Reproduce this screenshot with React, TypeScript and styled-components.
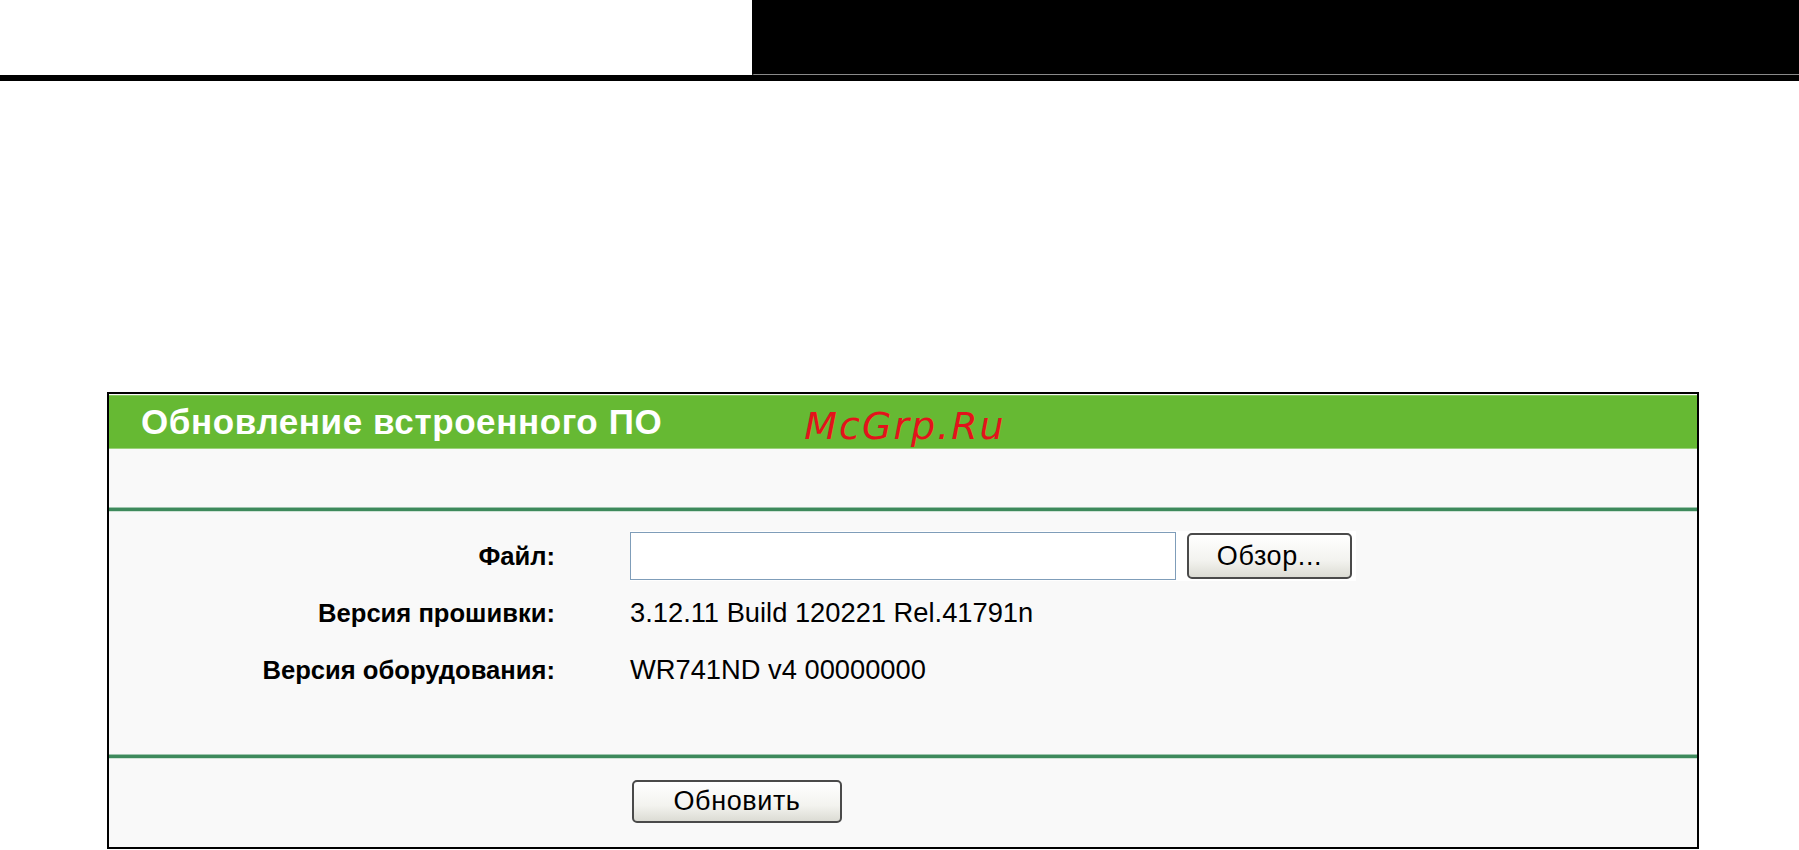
import React from "react";
import styled, { createGlobalStyle } from "styled-components";

const GlobalStyle = createGlobalStyle`
  html, body {
    margin: 0;
    padding: 0;
    background: #fff;
    font-family: "Liberation Sans", Arial, sans-serif;
  }
`;

const rows = [
  { label: "Версия прошивки:", value: "3.12.11 Build 120221 Rel.41791n" },
  { label: "Версия оборудования:", value: "WR741ND v4 00000000" },
];

export default function App() {
  return (
    <>
      <GlobalStyle />
      <Page>
        <Header>
          <HeaderBlank />
          <HeaderDark />
        </Header>
        <HeaderRule />

        <Panel>
          <TitleBar>
            <Title>Обновление встроенного ПО</Title>
            <Watermark>McGrp.Ru</Watermark>
          </TitleBar>
          <Spacer />
          <Separator />

          <FormBody>
            <Label>Файл:</Label>
            <FileField>
              <FileInput type="text" />
              <Button>Обзор...</Button>
            </FileField>
            {rows.map((row) => (
              <React.Fragment key={row.label}>
                <Label>{row.label}</Label>
                <Value>{row.value}</Value>
              </React.Fragment>
            ))}
          </FormBody>

          <Separator />
          <Footer>
            <Button $wide>Обновить</Button>
          </Footer>
        </Panel>
      </Page>
    </>
  );
}

const Page = styled.div`
  width: 1799px;
  height: 850px;
  overflow: hidden;
`;

const Header = styled.div`
  display: flex;
  height: 75px;
`;

const HeaderBlank = styled.div`
  width: 752px;
  background: #fff;
`;

const HeaderDark = styled.div`
  flex: 1;
  background: #000;
  border-left: 2px solid #000;
  border-bottom: 1px solid #8a8a8a;
`;

const HeaderRule = styled.div`
  height: 6px;
  background: #000;
`;

const Panel = styled.div`
  margin: 311px 0 0 107px;
  width: 1588px;
  height: 453px;
  border: 2px solid #000;
  background: #f9f9f9;
  display: flex;
  flex-direction: column;
`;

const TitleBar = styled.div`
  height: 52px;
  margin-top: 1px;
  background: #66b933;
  border-top: 1px solid #86c85c;
  border-bottom: 1px solid #9bd27a;
  display: flex;
  align-items: center;
  padding-left: 32px;
  gap: 142px;
`;

const Title = styled.div`
  color: #fff;
  font-weight: bold;
  font-size: 35px;
  letter-spacing: 0.6px;
`;

const Watermark = styled.div`
  color: #e3131b;
  font-family: "DejaVu Sans", sans-serif;
  font-style: italic;
  font-size: 38px;
  letter-spacing: 2px;
  margin-top: 8px;
`;

const Spacer = styled.div`
  height: 58px;
`;

const Separator = styled.div`
  height: 3px;
  background: #3e8a5c;
  border-top: 1px solid #9fc6ae;
  border-bottom: 1px solid #cfe3d6;
`;

const FormBody = styled.div`
  flex: 1;
  display: grid;
  grid-template-columns: 446px 1fr;
  grid-auto-rows: 50px;
  row-gap: 7px;
  column-gap: 75px;
  align-items: center;
  padding-top: 19px;
  align-content: start;
`;

const Label = styled.div`
  text-align: right;
  font-weight: bold;
  font-size: 25.6px;
  color: #000;
`;

const Value = styled.div`
  font-size: 27.3px;
  color: #000;
`;

const FileField = styled.div`
  display: flex;
  align-items: center;
  gap: 11px;
  background: #fff;
  width: 726px;
  height: 50px;
`;

const FileInput = styled.input`
  width: 546px;
  height: 48px;
  box-sizing: border-box;
  border: 1px solid #7f9db9;
  background: #fff;
  font-size: 24px;
  padding: 0 6px;
  outline: none;
`;

const Button = styled.button<{ $wide?: boolean }>`
  width: ${(p) => (p.$wide ? "210px" : "165px")};
  height: ${(p) => (p.$wide ? "43px" : "46px")};
  box-sizing: border-box;
  border: 2px solid #4a4a4a;
  border-radius: 5px;
  background: linear-gradient(#ffffff, #f3f3ef 60%, #dcdcd4);
  font-family: "Liberation Sans", Arial, sans-serif;
  font-size: 27px;
  letter-spacing: 0.6px;
  color: #000;
  padding: 0;
`;

const Footer = styled.div`
  height: 88px;
  display: flex;
  align-items: center;
  padding-left: 523px;
  padding-bottom: 4px;
  box-sizing: border-box;
`;
